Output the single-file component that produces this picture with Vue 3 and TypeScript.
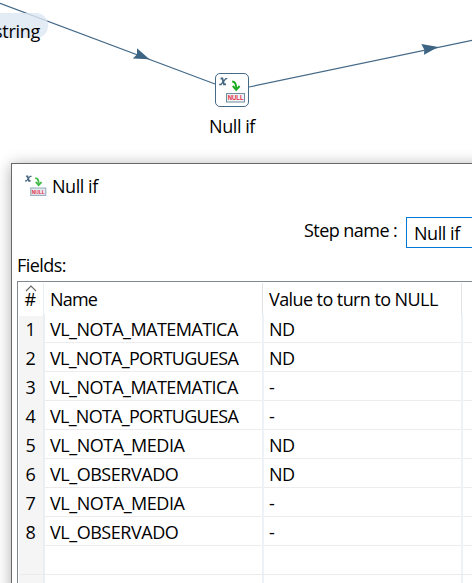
<script setup lang="ts">
interface FieldRow {
  name: string
  value: string
}

const rows: FieldRow[] = [
  { name: 'VL_NOTA_MATEMATICA', value: 'ND' },
  { name: 'VL_NOTA_PORTUGUESA', value: 'ND' },
  { name: 'VL_NOTA_MATEMATICA', value: '-' },
  { name: 'VL_NOTA_PORTUGUESA', value: '-' },
  { name: 'VL_NOTA_MEDIA', value: 'ND' },
  { name: 'VL_OBSERVADO', value: 'ND' },
  { name: 'VL_NOTA_MEDIA', value: '-' },
  { name: 'VL_OBSERVADO', value: '-' },
]
const emptyRows = 2

function tracking(name: string): string {
  if (name.endsWith('PORTUGUESA')) return 'tight'
  if (name.endsWith('MATEMATICA')) return 'medium'
  return 'normal'
}
</script>

<template>
  <main class="screen">
    <section class="canvas">
      <svg class="hops" width="472" height="163" viewBox="0 0 472 163">
        <g stroke="#456a88" stroke-width="1.2" fill="none">
          <path d="M0 3.3 L215 84" />
          <path d="M249 87 L472 40.3" />
        </g>
        <path d="M137 48.2 L149.5 59.2 L132.8 58.6 L137 54.6 Z" fill="#3d6482" />
        <path d="M421.3 44 L438.3 47 L424 54.8 L424.3 49.8 Z" fill="#3d6482" />
      </svg>
      <div class="note"><span>string</span></div>
      <div class="step">
        <div class="step-box">
          <svg width="32" height="32" viewBox="0 0 32 32">
            <g fill="none" stroke="#47647e">
              <path d="M4.6 4.5 H6.4 L8 10.4 H10" stroke-width="1.8" />
              <path d="M11.3 4.6 H9.8 L5 10.5 H3.2" stroke-width="1.3" />
            </g>
            <path d="M16.2 7.5 C19 7.5 20.2 9.2 20.2 14.5" fill="none" stroke="#19ac22" stroke-width="1.9" />
            <path d="M16.8 12 L20.2 15.8 L23.6 12" fill="none" stroke="#19ac22" stroke-width="2" />
            <rect x="10.5" y="19.5" width="18" height="8.5" fill="#edf3f6" stroke="#708c9f" />
            <text class="null-text" x="11.7" y="26.3" textLength="16" lengthAdjust="spacingAndGlyphs">NULL</text>
          </svg>
        </div>
        <span class="step-label">Null if</span>
      </div>
    </section>

    <section class="dialog">
      <header class="title-bar">
        <svg width="22" height="22" viewBox="3 3 27 27">
          <g fill="none" stroke="#47647e">
            <path d="M4.4 4.7 H6.2 L7.8 10.2 H9.8" stroke-width="1.9" />
            <path d="M11 4.7 H9.4 L4.8 10.2 H3" stroke-width="1.3" />
          </g>
          <path d="M15.6 6.8 C18.6 6.8 19.8 8.8 19.8 13.6" fill="none" stroke="#3bb943" stroke-width="2.1" />
          <path d="M16.2 11.6 L19.8 15.4 L23.4 11.6" fill="none" stroke="#3bb943" stroke-width="2.2" />
          <rect x="10" y="19" width="18.5" height="9" fill="#e5eaf0" stroke="#8fa6b8" stroke-width="1.2" />
          <text class="null-text" x="11.4" y="26.2" textLength="15.8" lengthAdjust="spacingAndGlyphs">NULL</text>
        </svg>
        <span class="title">Null if</span>
      </header>
      <div class="name-row">
        <label>Step name :</label>
        <div class="input"><span>Null if</span></div>
      </div>
      <div class="fields-label">Fields:</div>
      <div class="table">
        <div class="row head">
          <div class="cell num">
            <svg class="sort" width="12" height="7" viewBox="0 0 12 7">
              <path d="M1 6 L6 1 L11 6" fill="none" stroke="#666" stroke-width="1.1" />
            </svg>
            <span>#</span>
          </div>
          <div class="cell h-name">Name</div>
          <div class="cell h-value">Value to turn to NULL</div>
        </div>
        <div v-for="(row, i) in rows" :key="i" class="row">
          <div class="cell num">{{ i + 1 }}</div>
          <div class="cell" :class="tracking(row.name)">{{ row.name }}</div>
          <div class="cell">{{ row.value }}</div>
        </div>
        <div v-for="n in emptyRows" :key="`empty-${n}`" class="row">
          <div class="cell num"></div>
          <div class="cell"></div>
          <div class="cell"></div>
        </div>
      </div>
    </section>
  </main>
</template>

<style>
body {
  overflow: hidden;
  background: #fff;
}
</style>

<style scoped>
* {
  box-sizing: border-box;
}
.screen {
  width: 472px;
  height: 583px;
  overflow: hidden;
  background: #fff;
  color: #000;
  font: 18px/24px "Open Sans", "Noto Sans", sans-serif;
  letter-spacing: -0.45px;
  white-space: nowrap;
}
.canvas {
  position: relative;
  height: 163px;
}
.hops {
  display: block;
}
.note {
  position: absolute;
  left: -20px;
  top: 13px;
  width: 68px;
  height: 25px;
  padding-right: 8px;
  border-radius: 12px;
  background: rgba(220, 231, 242, 0.8);
  line-height: 36px;
  letter-spacing: -0.3px;
  text-align: right;
}
.step {
  position: absolute;
  left: 192px;
  top: 73px;
  width: 80px;
  display: flex;
  flex-direction: column;
  align-items: center;
}
.step-box {
  width: 34px;
  height: 34px;
  border: 1px solid #456a88;
  border-radius: 5px;
  background: #fff;
}
.step-box svg {
  display: block;
}
.step-label {
  margin-top: 7px;
}
.null-text {
  font: bold 7px "Liberation Sans", sans-serif;
  letter-spacing: 0;
  fill: #e52b42;
}
.dialog {
  position: relative;
  margin-left: 11px;
  width: 480px;
  height: 440px;
  border-left: 1px solid #66686a;
  border-top: 1px solid #66686a;
  background: #fff;
  box-shadow: 0 2px 14px rgba(0, 0, 0, 0.33);
}
.title-bar {
  display: flex;
  height: 44px;
  padding: 11px 0 0 13px;
}
.title {
  margin: -1px 0 0 5px;
}
.name-row {
  display: flex;
  height: 46px;
  padding: 9px 0 0 292px;
}
.name-row label {
  flex: none;
  width: 102px;
  padding-top: 1px;
  letter-spacing: -0.55px;
}
.input {
  flex: none;
  width: 100px;
  height: 31px;
  padding: 3px 0 0 7px;
  border: 1px solid #0078d7;
}
.fields-label {
  height: 27px;
  padding-left: 5px;
  line-height: 23px;
  letter-spacing: -0.55px;
}
.table {
  margin-left: 5px;
  padding-left: 1px;
  border-left: 1px solid #828790;
  border-top: 1px solid #828790;
}
.row {
  display: grid;
  grid-template-columns: 26px 219px 199px 20px;
  height: 29px;
  border-bottom: 1px solid #ececec;
  line-height: 30px;
}
.row.head {
  height: 32px;
  border-bottom: 0;
  line-height: 33px;
}
.cell {
  border-right: 2px solid #edf1f8;
  padding-left: 5px;
}
.head .cell {
  margin: 1px 1px 0 0;
  border-right: 1px solid #e2e2e2;
}
.cell.num {
  padding: 0 1px 0 0;
  text-align: center;
  border-right-color: #e9eef5;
  background: #f5f5f5;
}
.head .cell.num {
  position: relative;
  padding-right: 2px;
  background: #fff;
}
.h-name {
  letter-spacing: -0.8px;
}
.h-value {
  letter-spacing: -0.58px;
}
.tight {
  letter-spacing: -0.73px;
}
.medium {
  letter-spacing: -0.54px;
}
.normal {
  letter-spacing: -0.46px;
}
.sort {
  position: absolute;
  left: 6px;
  top: 2px;
}
</style>
